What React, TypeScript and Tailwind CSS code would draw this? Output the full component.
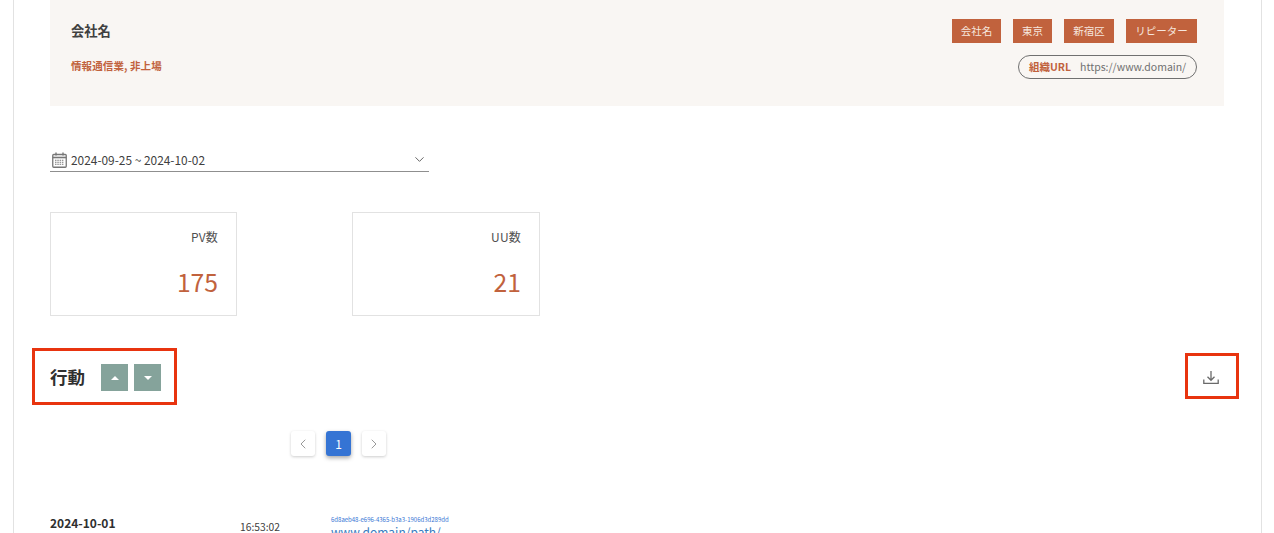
import React from "react";
import { ChevronDown, ChevronLeft, ChevronRight } from "lucide-react";

const font = { fontFamily: '"Noto Sans CJK JP", "Noto Sans", sans-serif' };
const tags = [
  { label: "会社名", w: "w-[49px]" },
  { label: "東京", w: "w-[39px]" },
  { label: "新宿区", w: "w-[50px]" },
  { label: "リピーター", w: "w-[71px]" },
];

function Card({ label, value, className }: { label: string; value: string; className: string }) {
  return (
    <div className={`h-[104px] border border-[#e2e2e2] pr-[18px] flex flex-col items-end ${className}`}>
      <div className="mt-[14px] text-[12px] leading-[20px] tracking-[0.2px] text-[#505050]">{label}</div>
      <div className="mt-[15px] text-[24.7px] leading-[38px] text-[#c1623d]">{value}</div>
    </div>
  );
}

function Arrow({ up }: { up?: boolean }) {
  return (
    <button className="w-[27px] h-[27px] bg-[#85a39b] flex items-center justify-center">
      <svg width="8" height="4" viewBox="0 0 8 4" className={up ? "" : "rotate-180"}>
        <path d="M0 4 L4 0 L8 4 Z" fill="#ffffff" />
      </svg>
    </button>
  );
}

function CalendarIcon() {
  return (
    <svg width="15" height="16" viewBox="0 0 15 16" fill="none" stroke="#777777" className="ml-[2px] shrink-0">
      <rect x="0.75" y="2.5" width="13.5" height="12.75" rx="1" strokeWidth="1.3" />
      <path d="M0.75 5.5H14.25" strokeWidth="1.6" />
      <path d="M4 0.5V3.5M11 0.5V3.5" strokeWidth="1.4" />
      <path d="M3 8.25H12M3 10.25H12M3 12.25H12" strokeWidth="1.1" strokeDasharray="1.5 0.8" />
    </svg>
  );
}

function DownloadIcon() {
  return (
    <svg width="16" height="15" viewBox="0 0 16 15" fill="none" stroke="#6a6a6a" strokeWidth="1.3" className="ml-auto mr-[6px] shrink-0">
      <path d="M8 1V10M4.5 6.8L8 10.3L11.5 6.8" />
      <path d="M0.8 9.5V13.3H15.2V9.5" />
    </svg>
  );
}

export default function App() {
  return (
    <div style={font} className="h-[533px] w-[1274px] overflow-hidden bg-white">
      <div className="ml-[13px] w-[1249px] h-[533px] border-x border-[#e2e2e2] px-[36px] overflow-hidden">
        <section className="h-[106px] w-[1174px] bg-[#f9f6f3] pl-[21px] pr-[27px] pt-[19px] flex justify-between">
          <div>
            <div className="mt-[2px] text-[13.3px] leading-[20px] font-bold text-[#404040]">会社名</div>
            <div className="mt-[17px] text-[10.5px] leading-[16px] tracking-[0.1px] font-bold text-[#c1623d]">情報通信業, 非上場</div>
          </div>
          <div className="flex flex-col items-end">
            <div className="flex gap-[12px]">
              {tags.map((t) => (
                <span key={t.label} className={`${t.w} h-[24px] bg-[#c1623d] text-[#f6e6de] text-[10.5px] flex items-center justify-center`}>
                  {t.label}
                </span>
              ))}
            </div>
            <div className="mt-[12px] h-[24px] w-[179px] rounded-full border border-[#707070] flex items-center pl-[10px] text-[10.5px]">
              <span className="font-bold text-[#c1623d]">組織URL</span>
              <span className="ml-[9px] text-[#707070]">https://www.domain/</span>
            </div>
          </div>
        </section>

        <div className="mt-[44px] w-[379px] h-[22px] pb-[2px] border-b border-[#8f8f8f] flex items-center">
          <CalendarIcon />
          <span className="ml-[4px] text-[11.9px] text-[#404040]">2024-09-25 ~ 2024-10-02</span>
          <ChevronDown size={15} strokeWidth={1.6} className="ml-auto mr-[2px] text-[#666666]" />
        </div>

        <div className="mt-[40px] flex">
          <Card label="PV数" value="175" className="w-[187px]" />
          <Card label="UU数" value="21" className="ml-[115px] w-[188px]" />
        </div>

        <div className="relative mt-[48px] h-[27px] flex items-center">
          <h2 className="text-[17.5px] font-bold text-[#303030] w-[51px]">行動</h2>
          <div className="flex gap-[6px]">
            <Arrow up />
            <Arrow />
          </div>
          <DownloadIcon />
          <div className="absolute left-[-18px] top-[-16px] w-[145px] h-[57px] border-[3px] border-[#e8340f]" />
          <div className="absolute left-[1135px] top-[-11px] w-[54px] h-[46px] border-[3px] border-[#e8340f]" />
        </div>

        <div className="mt-[40px] ml-[241px] flex items-center">
          <button className="w-[24px] h-[25px] rounded-[3px] bg-white shadow-[0_1px_3px_rgba(0,0,0,0.2)] flex items-center justify-center text-[#999999]">
            <ChevronLeft size={16} strokeWidth={1.5} />
          </button>
          <button className="ml-[11px] w-[25px] h-[25px] rounded-[3px] bg-[#3574d4] shadow-[0_2px_4px_rgba(0,0,0,0.35)] text-white text-[12px] flex items-center justify-center">
            1
          </button>
          <button className="ml-[11px] w-[24px] h-[25px] rounded-[3px] bg-white shadow-[0_1px_3px_rgba(0,0,0,0.2)] flex items-center justify-center text-[#999999]">
            <ChevronRight size={16} strokeWidth={1.5} />
          </button>
        </div>

        <div className="mt-[58px] flex">
          <div className="w-[190px] text-[12px] leading-[18px] font-bold text-[#303030]">2024-10-01</div>
          <div className="w-[91px] pt-[4px] text-[10.3px] leading-[18px] text-[#404040]">16:53:02</div>
          <div>
            <div className="mt-[1px] text-[6px] leading-[10px] text-[#3574d4]">6d8aeb48-e696-4365-b3a3-1906d3d289dd</div>
            <div className="-mt-[2px] text-[12px] leading-[18px] text-[#3a7cc0]">www.domain/path/</div>
          </div>
        </div>
      </div>
    </div>
  );
}
